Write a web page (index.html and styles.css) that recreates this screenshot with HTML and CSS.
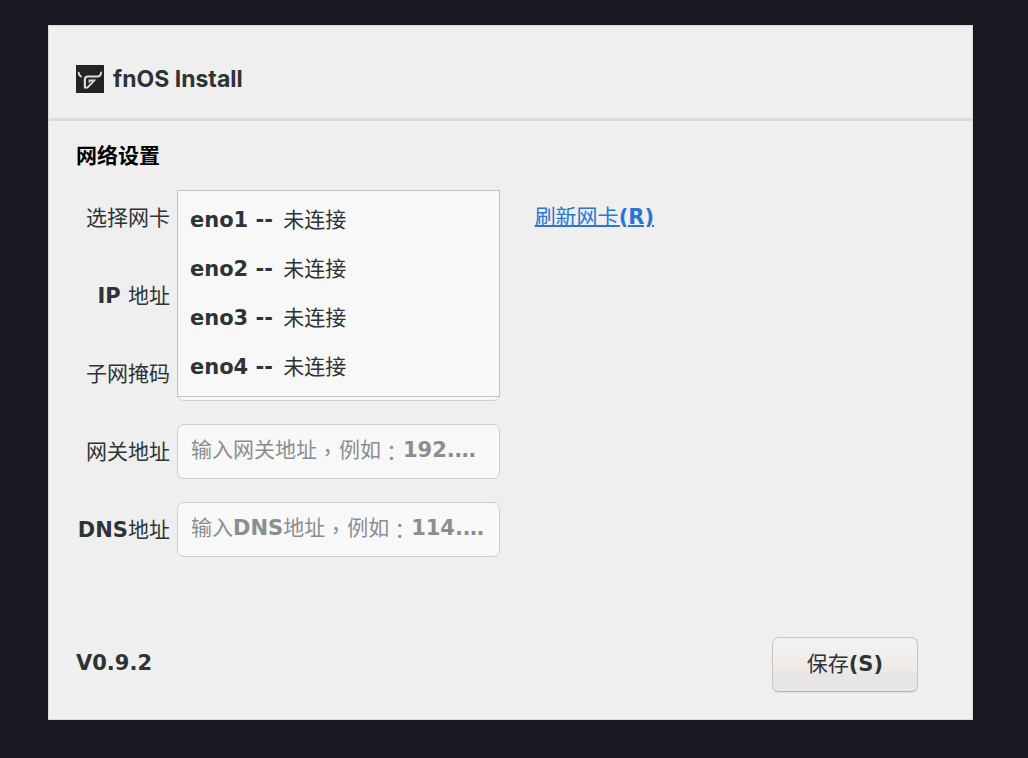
FILE: index.html
```html
<!DOCTYPE html>
<html lang="zh-CN">
<head>
    <meta charset="UTF-8">
    <meta name="viewport" content="width=device-width, initial-scale=1.0">
    <title>fnOS Install</title>
    <link rel="stylesheet" href="styles.css">
</head>
<body>
    <div class="window">
        <header class="header">
            <svg class="logo" viewBox="0 0 28 28" aria-hidden="true">
                <rect width="28" height="28" fill="#222324"/>
                <path d="M1.8 6.4L3.8 7.4C3.8 9 4.4 10 5.8 10.8L5.4 12.8C2.8 11.6 1.4 9.6 1.8 6.4Z" fill="#d5dcdc"/>
                <path d="M26 6.2L24.2 7.2C24.2 9.2 23.2 10.2 21 10.4H11.8Q7.8 10.6 7.8 14.4V23.6H12L20.4 14.6H12.6V18.4L14.4 16.6H16L11 21.8H10V14.4Q10 12.6 12 12.6H21.6C24.8 12.4 26.4 10 26 6.2Z" fill="#d5dcdc"/>
            </svg>
            <h1 class="title">fnOS Install</h1>
        </header>

        <form class="content">
            <h2 class="section-title">网络设置</h2>

            <div class="fields">
                <label class="label" for="nic">选择网卡</label>
                <div class="field">
                    <select class="control" id="nic">
                        <option>eno1 -- 未连接</option>
                        <option>eno2 -- 未连接</option>
                        <option>eno3 -- 未连接</option>
                        <option>eno4 -- 未连接</option>
                    </select>
                    <ul class="menu" role="listbox" aria-label="选择网卡">
                        <li class="menu-item" role="option"><b>eno1 -- </b>未连接</li>
                        <li class="menu-item" role="option"><b>eno2 -- </b>未连接</li>
                        <li class="menu-item" role="option"><b>eno3 -- </b>未连接</li>
                        <li class="menu-item" role="option"><b>eno4 -- </b>未连接</li>
                    </ul>
                </div>
                <a class="refresh" href="#">刷新网卡<b>(R)</b></a>

                <label class="label" for="ip"><b>IP </b>地址</label>
                <div class="field">
                    <input class="control" type="text" id="ip">
                </div>

                <label class="label" for="mask">子网掩码</label>
                <div class="field">
                    <input class="control" type="text" id="mask">
                </div>

                <label class="label" for="gateway">网关地址</label>
                <div class="field">
                    <input class="control" type="text" id="gateway" placeholder=" " aria-describedby="gateway-hint">
                    <span class="hint" id="gateway-hint">输入网关地址<span class="punct" lang="zh-TW">，</span>例如<span class="punct" lang="zh-TW">：</span><b>192.…</b></span>
                </div>

                <label class="label" for="dns"><b>DNS</b>地址</label>
                <div class="field">
                    <input class="control" type="text" id="dns" placeholder=" " aria-describedby="dns-hint">
                    <span class="hint" id="dns-hint">输入<b>DNS</b>地址<span class="punct" lang="zh-TW">，</span>例如<span class="punct" lang="zh-TW">：</span><b>114.…</b></span>
                </div>
            </div>

            <div class="footer">
                <span class="version">V0.9.2</span>
                <button class="btn" type="button">保存<b>(S)</b></button>
            </div>
        </form>
    </div>
</body>
</html>
```
FILE: styles.css
```css
* {
    margin: 0;
    padding: 0;
    box-sizing: border-box;
}

body {
    background-color: #181821;
    color: #2e3436;
    font-family: "DejaVu Sans", "Noto Sans CJK SC", sans-serif;
    font-size: 21px;
    line-height: 28px;
}

.window {
    margin: 25px 55px 39px 48px;
    background-color: #efefef;
    border: 1px solid #d8d8d8;
}

.header {
    display: flex;
    align-items: center;
    gap: 9px;
    padding: 39px 27px 25px;
    border-bottom: 3px solid #dadada;
}

.logo {
    width: 28px;
    height: 28px;
}

.title {
    font-family: Inter, sans-serif;
    font-size: 23px;
    font-weight: 700;
}

.content {
    padding: 21px 54px 27px 27px;
}

.section-title {
    margin-bottom: 20px;
    color: #000;
    font-size: 21px;
    font-weight: 700;
}

.fields {
    display: grid;
    grid-template-columns: max-content 11fr 13fr;
    row-gap: 23px;
    align-items: center;
}

.label {
    grid-column: 1;
    min-width: 101px;
    padding-right: 7px;
    text-align: right;
    white-space: pre;
}

.field {
    grid-column: 2;
    position: relative;
    margin-right: 17px;
}

.control {
    display: block;
    width: 100%;
    height: 55px;
    padding: 0 13px;
    background-color: #f8f8f8;
    border: 1px solid #cfcfcf;
    border-radius: 7px;
    color: inherit;
    font: inherit;
}

select.control {
    appearance: none;
}

/* Hint shown over an empty input */
.hint {
    position: absolute;
    top: 12px;
    left: 14px;
    color: #8b8e8f;
    white-space: nowrap;
    pointer-events: none;
}

.control:not(:placeholder-shown) + .hint {
    display: none;
}

.punct {
    margin-right: 1px;
    font-family: "Noto Sans CJK TC", sans-serif;
    line-height: 1;
    vertical-align: -3px;
}

/* Opened network card list */
.menu {
    position: absolute;
    top: 0;
    left: 0;
    z-index: 1;
    width: 100%;
    padding: 5px 0 4px;
    background-color: #f8f8f8;
    border: 1px solid #c6c0c1;
    list-style: none;
}

.menu-item {
    padding: 0 12px;
    line-height: 49px;
    white-space: pre;
}

.menu-item b {
    margin-right: 3px;
}

.refresh {
    grid-column: 3;
    justify-self: start;
    margin-left: 18px;
    padding-bottom: 2px;
    color: #2a76d2;
    text-underline-offset: 1px;
}

.footer {
    display: flex;
    justify-content: space-between;
    align-items: center;
    margin-top: 80px;
}

.version {
    padding-bottom: 4px;
    font-weight: 700;
}

.btn {
    height: 55px;
    padding: 0 34px 2px;
    background: linear-gradient(#f2f2f2, #efede9 52%, #efe6e5 56%, #efe6e5 66%, #e6e6e6 68%, #e8e8e8);
    border: 1px solid #cdc5c4;
    border-bottom-color: #bcb7ae;
    border-radius: 7px;
    box-shadow: 0 1px 1px #dedad6;
    color: inherit;
    font: inherit;
}
```
